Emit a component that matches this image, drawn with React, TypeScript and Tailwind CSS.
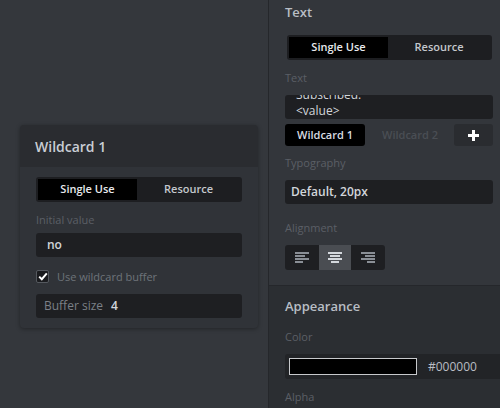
import React from "react";

const font = { fontFamily: '"Open Sans", "Noto Sans", sans-serif' };

function Segmented({ className = "" }: { className?: string }) {
  return (
    <div className={`flex h-[25px] rounded-[3px] bg-[#1d1e21] p-[2px] ${className}`}>
      <div className="flex w-[99px] items-center justify-center bg-black text-[11px] font-semibold text-[#e8eaed]">Single Use</div>
      <div className="flex flex-1 items-center justify-center text-[11px] font-semibold text-[#c4c8cd]">Resource</div>
    </div>
  );
}

function AlignIcon({ mode, active }: { mode: "l" | "c" | "r"; active?: boolean }) {
  const c = active ? "#d4d8dd" : "#8a8f96";
  const lines =
    mode === "l"
      ? [[0, 0, 14], [0, 3, 10], [0, 6, 14], [0, 9, 8]]
      : mode === "c"
      ? [[0, 0, 14], [2, 3, 10], [0, 6, 14], [3, 9, 8]]
      : [[0, 0, 14], [4, 3, 10], [0, 6, 14], [6, 9, 8]];
  return (
    <svg width="14" height="11" viewBox="0 0 14 11">
      {lines.map(([x, y, w], i) => (
        <rect key={i} x={x} y={y} width={w} height="2" fill={c} />
      ))}
    </svg>
  );
}

export default function App() {
  return (
    <div style={font} className="flex h-[408px] w-[500px] overflow-hidden bg-[#34373c]">
      {/* canvas */}
      <div className="relative w-[268px] shrink-0">
        <div className="absolute left-[20px] top-[125px] w-[238px] overflow-hidden rounded-[4px] bg-[#303338] shadow-[0_1px_4px_rgba(0,0,0,0.35)]">
          <div className="flex h-[42px] items-center bg-[#2a2c30] px-[15px] text-[14px] font-semibold text-[#c9ced5]">Wildcard 1</div>
          <div className="px-[16px] pb-[10px] pt-[10px]">
            <Segmented />
            <div className="mt-[10px] text-[11px] leading-[16px] text-[#5b5f66]">Initial value</div>
            <div className="mt-[5px] flex h-[24px] items-center rounded-[3px] bg-[#1e1f22] px-[11px] text-[12px] font-semibold text-[#d2d6db]">no</div>
            <div className="mt-[12px] flex h-[15px] items-center gap-[8px]">
              <div className="flex h-[13px] w-[13px] items-center justify-center rounded-[2px] border border-[#55595f] bg-[#1a1b1e]">
                <svg width="10" height="9" viewBox="0 0 10 9"><path d="M1.2 4.6 L3.8 7.2 L8.8 1.4" stroke="#ffffff" strokeWidth="2" fill="none" /></svg>
              </div>
              <span className="text-[11px] leading-[15px] text-[#6e737a]">Use wildcard buffer</span>
            </div>
            <div className="mt-[10px] flex h-[24px] items-center rounded-[3px] bg-[#1e1f22] px-[8px]">
              <span className="text-[12px] text-[#7b8087]">Buffer size</span>
              <span className="ml-[8px] text-[12px] font-semibold text-[#d2d6db]">4</span>
            </div>
          </div>
        </div>
      </div>
      {/* right panel */}
      <div className="flex flex-1 flex-col border-l border-[#25272b]">
        <div className="bg-[#33363b] pb-[15px] pl-[16px] pr-[7px] pt-[3px]">
          <div className="text-[13px] leading-[18px] font-semibold text-[#b9bec5]">Text</div>
          <Segmented className="ml-[2px] mr-[1px] mt-[14px]" />
          <div className="mt-[10px] text-[11px] leading-[16px] text-[#5b5f66]">Text</div>
          <div className="mt-[9px] h-[24px] overflow-hidden rounded-[3px] bg-[#1e1f22] px-[11px] text-[12px] leading-[16px] text-[#d2d6db]">
            <div className="mt-[-8px]">Subscribed:</div>
            <div>&lt;value&gt;</div>
          </div>
          <div className="mt-[5px] flex h-[22px] items-center">
            <div className="flex h-full w-[80px] items-center justify-center rounded-[3px] bg-black text-[11px] font-semibold text-[#d8dce1]">Wildcard 1</div>
            <div className="ml-[17px] text-[11px] font-semibold text-[#4a4e54]">Wildcard 2</div>
            <div className="ml-auto flex h-full w-[39px] items-center justify-center rounded-[3px] bg-[#2a2c30]">
              <svg width="11" height="11" viewBox="0 0 11 11"><rect x="4" y="0" width="3" height="11" fill="#fff" /><rect x="0" y="4" width="11" height="3" fill="#fff" /></svg>
            </div>
          </div>
          <div className="mt-[9px] text-[11px] leading-[16px] text-[#5b5f66]">Typography</div>
          <div className="mt-[9px] flex h-[24px] items-center rounded-[3px] bg-[#1e1f22] px-[6px] text-[12px] font-semibold text-[#d2d6db]">Default, 20px</div>
          <div className="mt-[16px] text-[11px] leading-[16px] text-[#5b5f66]">Alignment</div>
          <div className="mt-[9px] flex h-[25px] w-[100px] overflow-hidden rounded-[3px] bg-[#1e1f22]">
            <div className="flex w-[34px] items-center justify-center"><AlignIcon mode="l" /></div>
            <div className="flex w-[32px] items-center justify-center bg-[#4a4d52]"><AlignIcon mode="c" active /></div>
            <div className="flex flex-1 items-center justify-center"><AlignIcon mode="r" /></div>
          </div>
        </div>
        <div className="flex-1 border-t border-[#25272b] bg-[#2b2e32] pl-[16px] pt-[11px]">
          <div className="text-[13px] leading-[18px] font-semibold text-[#b9bec5]">Appearance</div>
          <div className="mt-[14px] text-[11px] leading-[16px] text-[#5b5f66]">Color</div>
          <div className="mt-[9px] flex h-[25px] items-center rounded-l-[3px] bg-[#222427] pl-[4px]">
            <div className="h-[17px] w-[128px] border border-[#c7c9cc] bg-black" />
            <span className="ml-[11px] text-[12px] text-[#b9bdc3]">#000000</span>
          </div>
          <div className="mt-[10px] text-[11px] leading-[16px] text-[#5b5f66]">Alpha</div>
        </div>
      </div>
    </div>
  );
}
